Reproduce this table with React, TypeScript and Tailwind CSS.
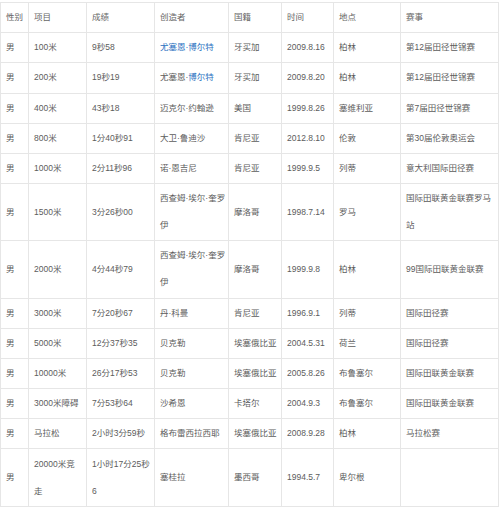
import React from 'react';

type Row = {
  sex: string;
  event: React.ReactNode;
  mark: React.ReactNode;
  holder: React.ReactNode;
  nation: string;
  date: string;
  place: string;
  meet: React.ReactNode;
};

const blue = 'text-[#1f6fc0]';

const rows: Row[] = [
  { sex: '男', event: '100米', mark: '9秒58', holder: <span className={blue}>尤塞恩·博尔特</span>, nation: '牙买加', date: '2009.8.16', place: '柏林', meet: '第12届田径世锦赛' },
  { sex: '男', event: '200米', mark: '19秒19', holder: <>尤塞恩·<span className={blue}>博尔特</span></>, nation: '牙买加', date: '2009.8.20', place: '柏林', meet: '第12届田径世锦赛' },
  { sex: '男', event: '400米', mark: '43秒18', holder: '迈克尔·约翰逊', nation: '美国', date: '1999.8.26', place: '塞维利亚', meet: '第7届田径世锦赛' },
  { sex: '男', event: '800米', mark: '1分40秒91', holder: '大卫·鲁迪沙', nation: '肯尼亚', date: '2012.8.10', place: '伦敦', meet: '第30届伦敦奥运会' },
  { sex: '男', event: '1000米', mark: '2分11秒96', holder: '诺·恩吉尼', nation: '肯尼亚', date: '1999.9.5', place: '列蒂', meet: '意大利国际田径赛' },
  { sex: '男', event: '1500米', mark: '3分26秒00', holder: <>西查姆·埃尔·奎罗<br />伊</>, nation: '摩洛哥', date: '1998.7.14', place: '罗马', meet: <>国际田联黄金联赛罗马<br />站</> },
  { sex: '男', event: '2000米', mark: '4分44秒79', holder: <>西查姆·埃尔·奎罗<br />伊</>, nation: '摩洛哥', date: '1999.9.8', place: '柏林', meet: '99国际田联黄金联赛' },
  { sex: '男', event: '3000米', mark: '7分20秒67', holder: '丹·科曼', nation: '肯尼亚', date: '1996.9.1', place: '列蒂', meet: '国际田径赛' },
  { sex: '男', event: '5000米', mark: '12分37秒35', holder: '贝克勒', nation: '埃塞俄比亚', date: '2004.5.31', place: '荷兰', meet: '国际田径赛' },
  { sex: '男', event: '10000米', mark: '26分17秒53', holder: '贝克勒', nation: '埃塞俄比亚', date: '2005.8.26', place: '布鲁塞尔', meet: '国际田联黄金联赛' },
  { sex: '男', event: '3000米障碍', mark: '7分53秒64', holder: '沙希恩', nation: '卡塔尔', date: '2004.9.3', place: '布鲁塞尔', meet: '国际田联黄金联赛' },
  { sex: '男', event: '马拉松', mark: '2小时3分59秒', holder: '格布雷西拉西耶', nation: '埃塞俄比亚', date: '2008.9.28', place: '柏林', meet: '马拉松赛' },
  { sex: '男', event: <>20000米竞<br />走</>, mark: <>1小时17分25秒<br />6</>, holder: '塞桂拉', nation: '墨西哥', date: '1994.5.7', place: '卑尔根', meet: '' },
];

const headers = ['性别', '项目', '成绩', '创造者', '国籍', '时间', '地点', '赛事'];
const widths = ['w-[28px]', 'w-[58px]', 'w-[68px]', 'w-[74px]', 'w-[53px]', 'w-[52px]', 'w-[67px]', 'w-[98px]'];

const cell = 'border border-[#e6e6e6] pl-[5px] pr-[2px] py-[1.1px] whitespace-nowrap align-middle';

export default function App() {
  return (
    <div className="bg-white pt-[2px] w-[500px] h-[508px] overflow-hidden font-['Liberation_Sans','Noto_Sans_CJK_SC',sans-serif] text-[8.5px] leading-[27px] text-[#5c5c5c]">
      <table className="table-fixed border-collapse w-[499px]">
        <colgroup>
          {widths.map((w, i) => (
            <col key={i} className={w} />
          ))}
        </colgroup>
        <thead>
          <tr>
            {headers.map((h) => (
              <th key={h} className={`${cell} text-left font-normal text-[#666]`}>
                {h}
              </th>
            ))}
          </tr>
        </thead>
        <tbody>
          {rows.map((r, i) => (
            <tr key={i}>
              <td className={cell}>{r.sex}</td>
              <td className={cell}>{r.event}</td>
              <td className={cell}>{r.mark}</td>
              <td className={cell}>{r.holder}</td>
              <td className={cell}>{r.nation}</td>
              <td className={cell}>{r.date}</td>
              <td className={cell}>{r.place}</td>
              <td className={cell}>{r.meet}</td>
            </tr>
          ))}
        </tbody>
      </table>
    </div>
  );
}
